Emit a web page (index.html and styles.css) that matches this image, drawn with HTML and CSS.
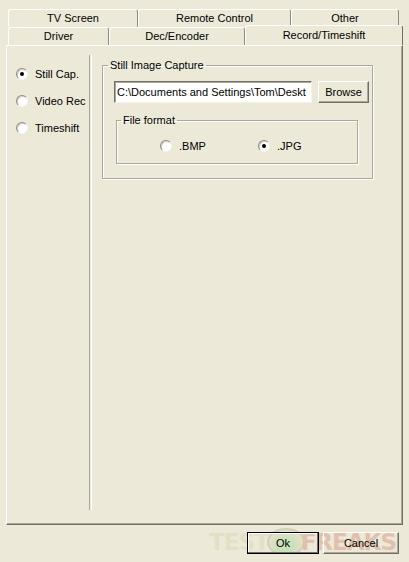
FILE: index.html
```html
<!DOCTYPE html>
<html lang="en">
<head>
  <meta charset="UTF-8" />
  <title>Settings</title>
  <link rel="stylesheet" href="styles.css">
</head>
<body>
  <div class="dialog">
    <div class="tab-row back">
      <div class="tab w-tv">TV Screen</div>
      <div class="tab w-remote">Remote Control</div>
      <div class="tab w-other">Other</div>
    </div>
    <div class="tab-row front">
      <div class="tab w-driver">Driver</div>
      <div class="tab w-dec">Dec/Encoder</div>
      <div class="tab w-rec active">Record/Timeshift</div>
    </div>

    <div class="panel">
      <div class="side">
        <label class="radio-row"><span class="radio checked"></span>Still Cap.</label>
        <label class="radio-row"><span class="radio"></span>Video Rec</label>
        <label class="radio-row"><span class="radio"></span>Timeshift</label>
      </div>
      <div class="divider"></div>
      <div class="content">
        <fieldset class="group">
          <legend>Still Image Capture</legend>
          <div class="path-row">
            <div class="textbox">C:\Documents and Settings\Tom\Deskt</div>
            <button class="btn browse">Browse</button>
          </div>
          <fieldset class="group inner">
            <legend>File format</legend>
            <div class="format-row">
              <label class="radio-row"><span class="radio"></span>.BMP</label>
              <label class="radio-row"><span class="radio checked"></span>.JPG</label>
            </div>
          </fieldset>
        </fieldset>
      </div>
    </div>

    <div class="footer">
      <div class="watermark"><span class="wm-test">TEST</span><span class="wm-logo"></span><span class="wm-freaks">FREAKS</span></div>
      <button class="btn ok">Ok</button>
      <button class="btn cancel">Cancel</button>
    </div>
  </div>
</body>
</html>
```

FILE: styles.css
```css
body {
  margin: 0;
  background: #ece9d8;
  font-family: "Liberation Sans", Arial, sans-serif;
  font-size: 11px;
  color: #000;
  overflow: hidden;
}
.dialog {
  padding: 9px 6px 0 6px;
  position: relative;
}

/* tabs */
.tab-row {
  display: flex;
  height: 18px;
  padding-left: 2px;
}
.tab {
  box-sizing: border-box;
  height: 18px;
  line-height: 17px;
  text-align: center;
  border-top: 1px solid #fff;
  border-left: 1px solid #fff;
  border-right: 1px solid #8e8c80;
  border-radius: 3px 3px 0 0;
}
.w-tv { width: 130px; }
.w-remote { width: 153px; }
.w-other { width: 108px; }
.w-driver { width: 101px; }
.w-dec { width: 136px; }
.w-rec { width: 158px; }
.tab.active {
  position: relative;
  height: 20px;
  margin-top: -2px;
  line-height: 19px;
  background: #ece9d8;
  border-right: 1px solid #716f64;
  z-index: 1;
}

/* panel */
.panel {
  box-sizing: border-box;
  height: 480px;
  width: 397px;
  display: flex;
  border-top: 1px solid #fff;
  border-left: 1px solid #fff;
  border-right: 1px solid #716f64;
  border-bottom: 1px solid #716f64;
  box-shadow: inset -1px -1px #aca899;
}
.side {
  width: 82px;
  padding-top: 21px;
  display: flex;
  flex-direction: column;
  gap: 14px;
}
.side .radio-row {
  padding-left: 9px;
}
.divider {
  margin: 9px 0 14px;
  width: 1px;
  border-left: 1px solid #aca899;
  border-right: 1px solid #fff;
}
.content {
  padding: 13px 0 0 10px;
}

/* radio */
.radio-row {
  display: flex;
  align-items: center;
  height: 13px;
  gap: 7px;
}
.radio {
  flex-shrink: 0;
  box-sizing: border-box;
  width: 12px;
  height: 12px;
  border-radius: 50%;
  background: #fff;
  border: 1px solid;
  border-color: #8e8c80 #f4f3ee #f4f3ee #8e8c80;
  box-shadow: inset 1px 1px #d4d0c8;
  position: relative;
}
.radio.checked::after {
  content: "";
  position: absolute;
  left: 3px;
  top: 3px;
  width: 4px;
  height: 4px;
  border-radius: 50%;
  background: #000;
}

/* group boxes */
.group {
  margin: 0;
  width: 271px;
  box-sizing: border-box;
  height: 120px;
  padding: 10px 0 0 11px;
  border: 1px solid #aca899;
  box-shadow: inset 1px 1px #fff, 1px 1px #fff;
}
.group legend {
  padding: 0 2px;
  margin-left: -6px;
}
.group.inner {
  width: 242px;
  height: 50px;
  margin-top: 11px;
  margin-left: 2px;
  padding: 0;
}
.group.inner legend {
  margin-left: 4px;
}
.path-row {
  display: flex;
  gap: 6px;
}
.textbox {
  box-sizing: border-box;
  width: 198px;
  height: 22px;
  line-height: 20px;
  padding-left: 2px;
  background: #fff;
  white-space: nowrap;
  overflow: hidden;
  border: 1px solid;
  border-color: #716f64 #f4f3ee #f4f3ee #716f64;
  box-shadow: inset 1px 1px #aca899;
}
.format-row {
  display: flex;
  gap: 52px;
  padding: 13px 0 0 43px;
}
.format-row .radio-row {
  width: 46px;
}

/* buttons */
.btn {
  font-family: inherit;
  font-size: 11px;
  color: #000;
  background: #ece9d8;
  box-sizing: border-box;
  height: 22px;
  padding: 0;
  border: 1px solid;
  border-color: #fff #716f64 #716f64 #fff;
  box-shadow: inset -1px -1px #aca899;
}
.browse {
  width: 51px;
}
.footer {
  position: relative;
  display: flex;
  justify-content: flex-end;
  gap: 4px;
  padding: 7px 4px 0 0;
}
.ok {
  width: 72px;
  border: 1px solid #000;
  box-shadow: inset -1px -1px #716f64, inset 1px 1px #fff;
  position: relative;
  z-index: 1;
  background: transparent;
}
.cancel {
  width: 76px;
  position: relative;
  z-index: 1;
  background: transparent;
}
.watermark {
  position: absolute;
  left: 203px;
  top: 3px;
  display: flex;
  align-items: center;
  font-family: "DejaVu Sans", sans-serif;
  font-weight: bold;
  font-size: 23px;
  letter-spacing: -1px;
  opacity: 0.5;
}
.wm-test {
  color: #dcd9b4;
}
.wm-logo {
  width: 34px;
  height: 24px;
  margin: 0 -4px 0 -2px;
  border-radius: 50%;
  border: 2px solid #b9b6a6;
  background: radial-gradient(circle at 50% 70%, #a9d9a0 30%, #dcd9b4 70%);
}
.wm-freaks {
  color: #d79a84;
}
```
